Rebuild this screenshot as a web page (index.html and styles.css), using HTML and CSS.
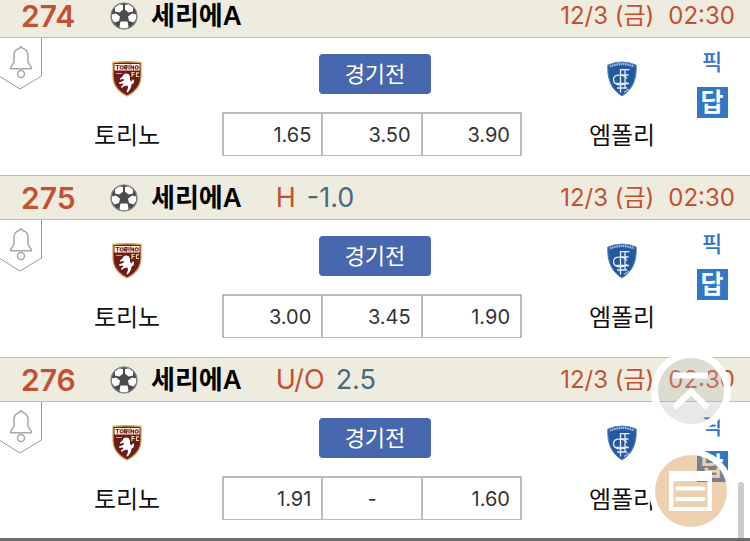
FILE: index.html
```
<!DOCTYPE html>
<html lang="ko">
<head>
<meta charset="utf-8">
<meta name="viewport" content="width=device-width, initial-scale=1">
<title>세리에A</title>
<link rel="stylesheet" href="styles.css">
</head>
<body>
<svg class="defs" aria-hidden="true">
  <symbol id="ball" viewBox="0 0 28 28">
    <circle cx="14" cy="14" r="13.2" fill="#4b4b4b"/>
    <g fill="#fff">
      <path d="M5 5.500 9 2.200 13 3 13 7.500 9.500 10.500 5 9.500z"/>
      <path d="M23 5.500 19 2.200 15 3 15 7.500 18.500 10.500 23 9.500z"/>
      <path d="M1.500 12.500 6 11.500 10 14.500 9 19 4.500 20.500 1.800 17z"/>
      <path d="M26.500 12.500 22 11.500 18 14.500 19 19 23.500 20.500 26.200 17z"/>
      <path d="M10.500 19.500h7l1 5-1.500 2h-6l-1.500-2z"/>
    </g>
    <circle cx="14" cy="14" r="13" fill="none" stroke="#858585" stroke-width="1.200"/>
  </symbol>
  <symbol id="bell" viewBox="0 0 42 53">
    <path d="M-1 38 20 51 41.500 38V-1H-1z" fill="#fff" stroke="#999" stroke-width="1"/>
    <g fill="none" stroke="#a8a8a8" stroke-width="1.500" stroke-linejoin="round">
      <path d="M21 8.500 19.200 10.600C15.500 11.500 14 14.500 14 18v5.500c0 3-3.500 4-3.500 7.300h21c0-3.300-3.500-4.300-3.500-7.300V18c0-3.500-1.500-6.500-5.200-7.400z"/>
      <circle cx="21" cy="36" r="3.500"/>
    </g>
  </symbol>
  <symbol id="torino" viewBox="0 0 30 36">
    <path d="M1 1.500Q15 0 29 1.500V15C29 25 23 31 15 35 7 31 1 25 1 15z" fill="#6b1c1c" stroke="#d9a456" stroke-width="1.300"/>
    <path d="M2.500 3h25v6.500h-25z" fill="#fff5e4"/>
    <g fill="none" stroke="#7a2a20" stroke-width="1.200">
      <path d="M3.500 4.500h4M5.500 4.500V8.500M12.700 8.500V4.600h2.300v2h-2.300l2.500 1.900M17 4V8.500M19 8.500V4.500l2.500 3.500V4.500"/>
      <circle cx="9.700" cy="6.400" r="1.600"/><circle cx="24.700" cy="6.400" r="1.600"/>
    </g>
    <path d="M4 12.500h6" stroke="#c99" stroke-width="1"/>
    <path d="M20 16v-4.500h2.500M20 13.500h2.500M27 11.800h-2.500V15.500H27" fill="none" stroke="#f3d6a0" stroke-width="1.200"/>
    <path d="M12 13 14 12.500l2.500.5 1.500 2.500v3.500l1.500 1.500 1.500-2.500 1 1.500-.5 3-2 1-.5 3-2 3.500-1.500 1.500-1-.5 1.500-4-.5-2.500-3 .5-3 2-.5-1.500 2.500-2-1-1-3 .5-.5-1.500 4-1.500 1.500-1.500-2.500-.5-1.500 1-.5-1.500 2-1.500z" fill="#fff"/>
  </symbol>
  <symbol id="empoli" viewBox="0 0 30 36">
    <path d="M.8 4Q15-2 29.200 4C30 19 25 29 15 35 5 29 0 19 .8 4z" fill="#2459a0" stroke="#5c86bb" stroke-width="1"/>
    <path d="M3 5.500Q15 .5 27 5.500" fill="none" stroke="#a9c1df" stroke-width="2.200" stroke-dasharray="1.500 .7"/>
    <g fill="none" stroke="#e4edf6" stroke-width="1.300">
      <path d="M22.500 8.700H13.500V31.500M13.500 14H21.500M18 9V27M9 22.500h13M10 27h10"/>
      <path d="M20 17.500C17 13 6.500 12.500 6.500 18.500S16 25.500 20 21.500"/>
    </g>
    <path d="M17 31.500 22 28" stroke="#a9c1df" stroke-width="1.200"/>
  </symbol>
</svg>

<main class="matches">
  <article class="match">
    <header class="bar">
      <strong class="number">274</strong>
      <svg class="ball" aria-hidden="true"><use href="#ball"/></svg>
      <h2 class="league">세리에A</h2>
      <time class="time"><span>12/3 (금)</span><span>02:30</span></time>
    </header>
    <div class="body">
      <button class="alarm" aria-label="알림"><svg aria-hidden="true"><use href="#bell"/></svg></button>
      <div class="team home"><svg class="crest" aria-hidden="true"><use href="#torino"/></svg><span>토리노</span></div>
      <div class="center">
        <span class="status">경기전</span>
        <table class="odds"><tbody><tr><td>1.65</td><td>3.50</td><td>3.90</td></tr></tbody></table>
      </div>
      <div class="team away"><svg class="crest" aria-hidden="true"><use href="#empoli"/></svg><span>엠폴리</span></div>
      <div class="links"><a class="pick" href="#">픽</a><a class="answer" href="#">답</a></div>
    </div>
  </article>

  <article class="match">
    <header class="bar">
      <strong class="number">275</strong>
      <svg class="ball" aria-hidden="true"><use href="#ball"/></svg>
      <h2 class="league">세리에A</h2>
      <p class="rule"><span class="kind">H</span><span class="line">-1.0</span></p>
      <time class="time"><span>12/3 (금)</span><span>02:30</span></time>
    </header>
    <div class="body">
      <button class="alarm" aria-label="알림"><svg aria-hidden="true"><use href="#bell"/></svg></button>
      <div class="team home"><svg class="crest" aria-hidden="true"><use href="#torino"/></svg><span>토리노</span></div>
      <div class="center">
        <span class="status">경기전</span>
        <table class="odds"><tbody><tr><td>3.00</td><td>3.45</td><td>1.90</td></tr></tbody></table>
      </div>
      <div class="team away"><svg class="crest" aria-hidden="true"><use href="#empoli"/></svg><span>엠폴리</span></div>
      <div class="links"><a class="pick" href="#">픽</a><a class="answer" href="#">답</a></div>
    </div>
  </article>

  <article class="match">
    <header class="bar">
      <strong class="number">276</strong>
      <svg class="ball" aria-hidden="true"><use href="#ball"/></svg>
      <h2 class="league">세리에A</h2>
      <p class="rule"><span class="kind">U/O</span><span class="line">2.5</span></p>
      <time class="time"><span>12/3 (금)</span><span>02:30</span></time>
    </header>
    <div class="body">
      <button class="alarm" aria-label="알림"><svg aria-hidden="true"><use href="#bell"/></svg></button>
      <div class="team home"><svg class="crest" aria-hidden="true"><use href="#torino"/></svg><span>토리노</span></div>
      <div class="center">
        <span class="status">경기전</span>
        <table class="odds"><tbody><tr><td>1.91</td><td class="none">-</td><td>1.60</td></tr></tbody></table>
      </div>
      <div class="team away"><svg class="crest" aria-hidden="true"><use href="#empoli"/></svg><span>엠폴리</span></div>
      <div class="links"><a class="pick" href="#">픽</a><a class="answer" href="#">답</a></div>
    </div>
  </article>
</main>

<div class="floating">
  <button class="float top" aria-label="맨 위로">
    <svg viewBox="0 0 80 80" aria-hidden="true">
      <circle cx="40" cy="40" r="36.500" fill="none" stroke="#fff" stroke-width="7"/>
      <circle cx="40" cy="40" r="33" fill="#b8b8b8" fill-opacity=".32"/>
      <path d="M22 24.500h35M23.500 56.500 40 40.500 56.500 56.500" fill="none" stroke="#fff" stroke-width="6"/>
    </svg>
  </button>
  <button class="float list" aria-label="목록">
    <svg viewBox="0 0 84 84" aria-hidden="true">
      <circle cx="42" cy="42" r="39" fill="none" stroke="#fff" stroke-width="6"/>
      <circle cx="42" cy="42" r="36" fill="#d59245" fill-opacity=".43"/>
      <path d="M20 22h43v40H20zM24.500 32v26h34V32z" fill="#fff" fill-rule="evenodd"/>
      <path d="M28.500 39.500h26M28.500 50h26" stroke="#fff" stroke-width="4" stroke-linecap="round"/>
    </svg>
  </button>
</div>
<div class="thumb"></div>
<div class="edge"></div>
</body>
</html>
```
FILE: styles.css
```
* {
  box-sizing: border-box;
}

html,
body {
  height: 100%;
  margin: 0;
  overflow: hidden;
}

body {
  background: #fff;
  color: #111;
  font-family: Inter, "Noto Sans CJK KR", sans-serif;
}

.defs {
  position: absolute;
  width: 0;
  height: 0;
}

button {
  padding: 0;
  border: 0;
  background: none;
}

svg {
  display: block;
}

/* The list is scrolled slightly past its first header. */
.matches {
  margin-top: -7px;
}

.bar {
  display: flex;
  align-items: center;
  height: 45px;
  padding: 0 15px 0 21px;
  border-top: 1px solid #bbb;
  border-bottom: 1px solid #bbb;
  background: #eeecdf;
  line-height: 28px;
  white-space: nowrap;
}

.number {
  width: 56px;
  margin-right: 33px;
  color: #c35033;
  font-size: 30px;
  font-weight: 600;
}

.ball {
  flex: none;
  width: 28px;
  height: 28px;
  margin-right: 13px;
}

.league {
  margin: 0;
  color: #000;
  font-size: 26px;
  font-weight: 600;
}

.rule {
  display: flex;
  gap: 11px;
  margin: 0 0 0 34px;
  font-size: 27px;
}

.kind,
.time {
  color: #c35033;
}

.line {
  color: #466b80;
}

.time {
  display: flex;
  align-items: baseline;
  gap: 14px;
  margin-left: auto;
  font-size: 24px;
}

.body {
  position: relative;
  display: grid;
  grid-template-columns: 80fr 94fr 396fr 104fr 76fr;
  height: 137px;
}

.alarm {
  position: absolute;
  top: 0;
  left: 0;
}

.alarm svg {
  width: 42px;
  height: 53px;
}

.team {
  display: flex;
  flex-direction: column;
  align-items: center;
  gap: 21px;
  padding-top: 23px;
  font-size: 24px;
  line-height: 36px;
  white-space: nowrap;
}

.home {
  grid-column: 2;
}

.crest {
  width: 30px;
  height: 36px;
}

.center {
  display: flex;
  flex-direction: column;
  align-items: center;
  gap: 18px;
  padding-top: 16px;
}

.status {
  width: 112px;
  margin-left: 6px;
  border-radius: 4px;
  background: #4768af;
  color: #fff;
  font-size: 22px;
  line-height: 40px;
  text-align: center;
}

.odds {
  width: 300px;
  border-collapse: collapse;
  table-layout: fixed;
  border: 2px solid #bbb;
  border-bottom-width: 1px;
  color: #333;
  font-size: 20px;
  line-height: 26px;
}

.odds td {
  height: 42px;
  padding: 2px 10px 0;
  border-left: 2px solid #bbb;
  text-align: right;
}

.odds .none {
  text-align: center;
}

.links {
  display: flex;
  flex-direction: column;
  align-items: center;
  gap: 9px;
  padding-top: 9px;
  font-weight: 500;
  line-height: 31px;
}

.pick {
  color: #3277c5;
  font-size: 22px;
  text-decoration: none;
}

.answer {
  width: 31px;
  height: 31px;
  background: #3277c5;
  color: #fff;
  font-size: 25px;
  font-weight: 700;
  text-align: center;
  text-decoration: none;
}

.floating {
  position: fixed;
  right: 17px;
  bottom: 8px;
  display: flex;
  flex-direction: column;
  align-items: center;
  gap: 18px;
}

.top svg {
  width: 80px;
  height: 80px;
}

.list svg {
  width: 84px;
  height: 84px;
}

.thumb {
  position: fixed;
  right: 6px;
  bottom: 0;
  width: 6px;
  height: 59px;
  border-radius: 3px 3px 0 0;
  background: #ccc;
}

.edge {
  position: fixed;
  right: 0;
  bottom: 0;
  left: 0;
  height: 3px;
  background: #6b6b6b;
}
```
